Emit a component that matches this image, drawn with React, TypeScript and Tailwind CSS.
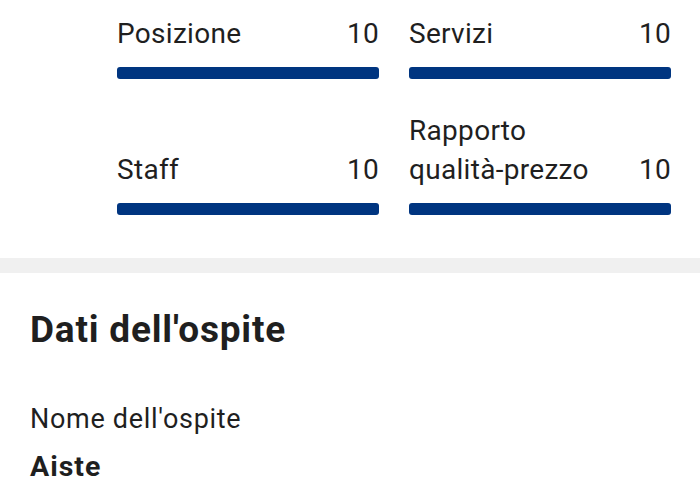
import React from "react";

interface ScoreProps {
  label: React.ReactNode;
  score: number;
}

const Score: React.FC<ScoreProps> = ({ label, score }) => {
  return (
    <div className="flex flex-col justify-end">
      <div className="flex items-end justify-between text-[28px] leading-[39px] tracking-[0.3px] text-[#1f1f1f]">
        <span>{label}</span>
        <span>{score}</span>
      </div>
      <div className="mt-[14px] h-[12px] w-full rounded-[3px] bg-[#003580]"></div>
    </div>
  );
};

export default function App() {
  return (
    <div
      className="w-[700px] h-[500px] overflow-hidden bg-white"
      style={{ fontFamily: "Roboto, 'Noto Sans', sans-serif" }}
    >
      {/* Review scores */}
      <div className="pl-[117px] pt-[14px] pb-[43px]">
        <div className="grid w-[554px] grid-cols-2 gap-x-[30px] gap-y-[32px]">
          <Score label="Posizione" score={10} />
          <Score label="Servizi" score={10} />
          <Score label="Staff" score={10} />
          <Score
            label={
              <>
                Rapporto
                <br />
                qualità-prezzo
              </>
            }
            score={10}
          />
        </div>
      </div>

      <div className="h-[15px] bg-[#f0f0f0]"></div>

      {/* Guest details */}
      <div className="px-[30px] pt-[35px]">
        <h2 className="text-[37px] leading-[44px] tracking-[0.8px] font-bold text-[#1f1f1f]">
          Dati dell'ospite
        </h2>
        <p className="mt-[51px] text-[27px] leading-[32px] tracking-[0.7px] text-[#1f1f1f]">
          Nome dell'ospite
        </p>
        <p className="mt-[14px] text-[28.5px] leading-[36px] tracking-[1px] font-bold text-[#1f1f1f]">
          Aiste
        </p>
      </div>
    </div>
  );
}
